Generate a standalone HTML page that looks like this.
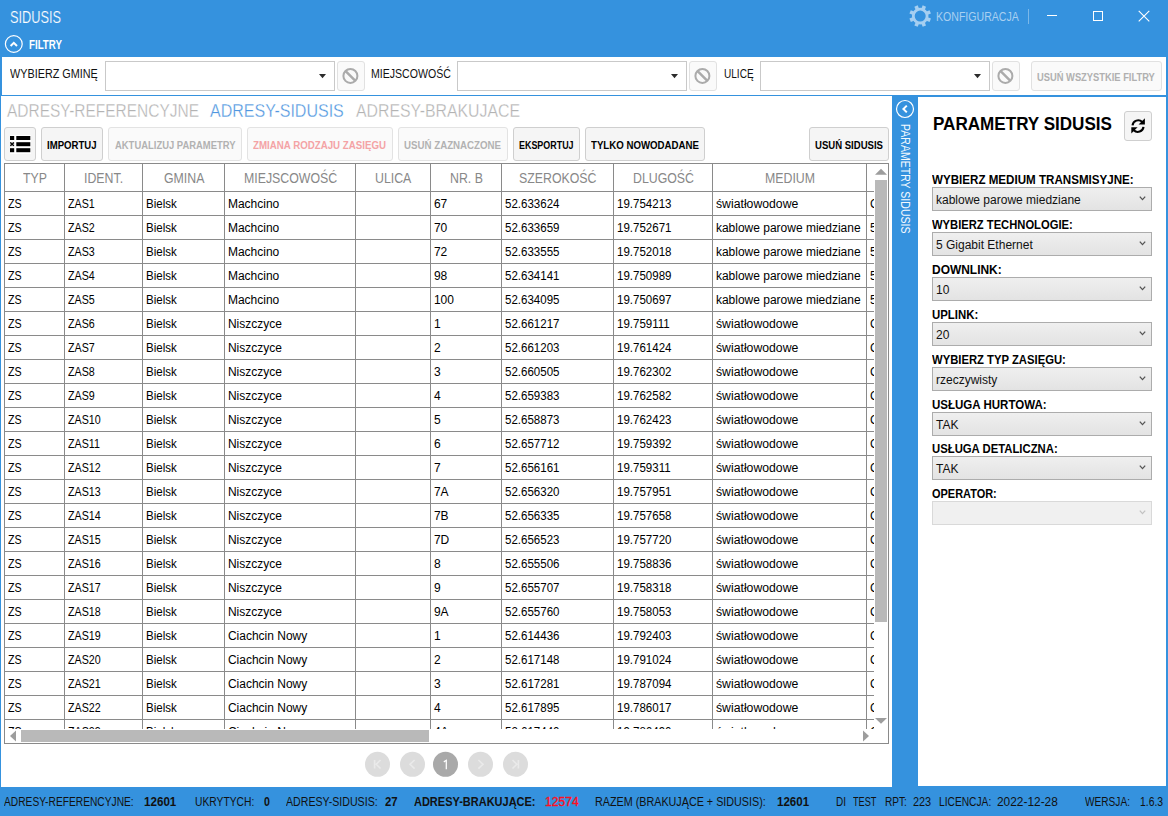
<!DOCTYPE html><html><head><meta charset="utf-8"><style>
html,body{margin:0;padding:0}
body{width:1168px;height:816px;overflow:hidden;position:relative;background:#3592de;font-family:"Liberation Sans",sans-serif}
.r{position:absolute}
.t{position:absolute;white-space:nowrap;transform-origin:0 0}
.c{position:absolute;white-space:nowrap;font-size:12px;line-height:12px;color:#000}
svg{display:block}
</style></head><body>
<div class="t" style="left:9.90px;top:10px;font-size:16px;line-height:16px;color:#fff;transform:scaleX(0.7969);-webkit-text-stroke:0.2px #3592de;">SIDUSIS</div>
<svg class="r" style="left:0;top:0" width="1168" height="60">
<circle cx="13.8" cy="44" r="8.4" fill="none" stroke="#fff" stroke-width="1.2"/>
<polyline points="10.6,46 13.8,42.8 17,46" fill="none" stroke="#fff" stroke-width="2"/>
</svg>
<div class="t" style="left:28.90px;top:39px;font-size:12px;line-height:12px;color:#fff;font-weight:bold;transform:scaleX(0.8112);">FILTRY</div>
<svg class="r" style="left:898px;top:-6px" width="44" height="44"><g transform="translate(22.2,22.1)">
<circle r="6.9" fill="none" stroke="#a6cff1" stroke-width="2.8"/><rect x="-1.8" y="-10.9" width="3.6" height="4" transform="rotate(22.5)" fill="#a6cff1"/><rect x="-1.8" y="-10.9" width="3.6" height="4" transform="rotate(67.5)" fill="#a6cff1"/><rect x="-1.8" y="-10.9" width="3.6" height="4" transform="rotate(112.5)" fill="#a6cff1"/><rect x="-1.8" y="-10.9" width="3.6" height="4" transform="rotate(157.5)" fill="#a6cff1"/><rect x="-1.8" y="-10.9" width="3.6" height="4" transform="rotate(202.5)" fill="#a6cff1"/><rect x="-1.8" y="-10.9" width="3.6" height="4" transform="rotate(247.5)" fill="#a6cff1"/><rect x="-1.8" y="-10.9" width="3.6" height="4" transform="rotate(292.5)" fill="#a6cff1"/><rect x="-1.8" y="-10.9" width="3.6" height="4" transform="rotate(337.5)" fill="#a6cff1"/></g></svg>
<div class="t" style="left:935.90px;top:11px;font-size:12px;line-height:12px;color:#a9d0f1;transform:scaleX(0.8807);">KONFIGURACJA</div>
<div class="r" style="left:1028px;top:9px;width:1px;height:15px;background:rgba(255,255,255,0.35)"></div>
<div class="r" style="left:1047px;top:15px;width:10px;height:1px;background:#fff"></div>
<div class="r" style="left:1093px;top:11px;width:10px;height:10px;border:1px solid #fff;box-sizing:border-box"></div>
<svg class="r" style="left:1136px;top:8px" width="16" height="16"><path d="M2.7 2.8 L13.3 13.4 M13.3 2.8 L2.7 13.4" stroke="#fff" stroke-width="1.1"/></svg>
<div class="r" style="left:2px;top:57px;width:1164px;height:38px;background:#fff"></div>
<div class="t" style="left:10.00px;top:68px;font-size:12px;line-height:12px;color:#111;transform:scaleX(0.9022);">WYBIERZ GMINĘ</div>
<div class="r" style="left:105px;top:61px;width:230px;height:30px;background:#fff;border:1px solid #c9c9c9;box-sizing:border-box"></div>
<svg class="r" style="left:315px;top:70px" width="14" height="12"><polygon points="4,4 11,4 7.5,8.3" fill="#2b2b2b"/></svg>
<div class="r" style="left:337px;top:61px;width:28px;height:30px;background:#fafafa;border:1px solid #e1e1e1;box-sizing:border-box;border-radius:3px"></div>
<svg class="r" style="left:337px;top:61px" width="28" height="30"><circle cx="13.4" cy="14.9" r="7" fill="none" stroke="#ababab" stroke-width="2"/><line x1="8.4" y1="9.9" x2="18.4" y2="19.9" stroke="#ababab" stroke-width="2.5"/></svg>
<div class="t" style="left:370.90px;top:68px;font-size:12px;line-height:12px;color:#111;transform:scaleX(0.8802);">MIEJSCOWOŚĆ</div>
<div class="r" style="left:457px;top:61px;width:230px;height:30px;background:#fff;border:1px solid #c9c9c9;box-sizing:border-box"></div>
<svg class="r" style="left:667px;top:70px" width="14" height="12"><polygon points="4,4 11,4 7.5,8.3" fill="#2b2b2b"/></svg>
<div class="r" style="left:689px;top:61px;width:28px;height:30px;background:#fafafa;border:1px solid #e1e1e1;box-sizing:border-box;border-radius:3px"></div>
<svg class="r" style="left:689px;top:61px" width="28" height="30"><circle cx="13.4" cy="14.9" r="7" fill="none" stroke="#ababab" stroke-width="2"/><line x1="8.4" y1="9.9" x2="18.4" y2="19.9" stroke="#ababab" stroke-width="2.5"/></svg>
<div class="t" style="left:724.00px;top:68px;font-size:12px;line-height:12px;color:#111;transform:scaleX(0.8376);">ULICĘ</div>
<div class="r" style="left:760px;top:61px;width:230px;height:30px;background:#fff;border:1px solid #c9c9c9;box-sizing:border-box"></div>
<svg class="r" style="left:970px;top:70px" width="14" height="12"><polygon points="4,4 11,4 7.5,8.3" fill="#2b2b2b"/></svg>
<div class="r" style="left:992px;top:61px;width:28px;height:30px;background:#fafafa;border:1px solid #e1e1e1;box-sizing:border-box;border-radius:3px"></div>
<svg class="r" style="left:992px;top:61px" width="28" height="30"><circle cx="13.4" cy="14.9" r="7" fill="none" stroke="#ababab" stroke-width="2"/><line x1="8.4" y1="9.9" x2="18.4" y2="19.9" stroke="#ababab" stroke-width="2.5"/></svg>
<div class="r" style="left:1031px;top:61px;width:131px;height:30px;background:#fafafa;border:1px solid #e1e1e1;box-sizing:border-box;border-radius:3px"></div>
<div class="t" style="left:1037.40px;top:72px;font-size:11px;line-height:11px;color:#b0b0b0;font-weight:bold;transform:scaleX(0.8493);">USUŃ WSZYSTKIE FILTRY</div>
<div class="r" style="left:1px;top:96px;width:891px;height:691px;background:#fff"></div>
<div class="t" style="left:7.40px;top:102px;font-size:18px;line-height:18px;color:#b3b3b3;transform:scaleX(0.8595);-webkit-text-stroke:0.3px #fff;">ADRESY-REFERENCYJNE</div>
<div class="t" style="left:210.40px;top:102px;font-size:18px;line-height:18px;color:#4f96e0;transform:scaleX(0.8897);-webkit-text-stroke:0.3px #fff;">ADRESY-SIDUSIS</div>
<div class="t" style="left:356.30px;top:102px;font-size:18px;line-height:18px;color:#b3b3b3;transform:scaleX(0.8799);-webkit-text-stroke:0.3px #fff;">ADRESY-BRAKUJACE</div>
<div class="r" style="left:4px;top:127px;width:32px;height:34px;background:#f5f5f5;border:1px solid #cfcfcf;box-sizing:border-box;border-radius:3px"></div>
<svg class="r" style="left:10px;top:135px" width="21" height="19">
<rect x="0" y="0" width="21" height="19" fill="#fff"/>
<rect x="0" y="1" width="4.2" height="4" fill="#000"/>
<rect x="0" y="7.2" width="4.2" height="4" fill="#b5b5b5"/>
<rect x="0" y="13.2" width="4.2" height="4" fill="#000"/>
<rect x="6.3" y="1" width="14" height="4" fill="#000"/>
<rect x="6.3" y="7.2" width="14" height="4" fill="#000"/>
<rect x="6.3" y="13.2" width="14" height="4" fill="#000"/>
<path d="M0.3 7.5 L3.9 10.9 M3.9 7.5 L0.3 10.9" stroke="#000" stroke-width="1.1"/>
</svg>
<div class="r" style="left:41px;top:127px;width:62px;height:34px;background:#f5f5f5;border:1px solid #cfcfcf;box-sizing:border-box;border-radius:3px"></div>
<div class="t" style="left:47.30px;top:140px;font-size:11px;line-height:11px;color:#000;font-weight:bold;transform:scaleX(0.8712);">IMPORTUJ</div>
<div class="r" style="left:108px;top:127px;width:134px;height:34px;background:#fafafa;border:1px solid #e3e3e3;box-sizing:border-box;border-radius:3px"></div>
<div class="t" style="left:114.70px;top:140px;font-size:11px;line-height:11px;color:#b2b2b2;font-weight:bold;transform:scaleX(0.8572);">AKTUALIZUJ PARAMETRY</div>
<div class="r" style="left:247px;top:127px;width:146px;height:34px;background:#fafafa;border:1px solid #e3e3e3;box-sizing:border-box;border-radius:3px"></div>
<div class="t" style="left:253.00px;top:140px;font-size:11px;line-height:11px;color:#f4a3a5;font-weight:bold;transform:scaleX(0.8835);">ZMIANA RODZAJU ZASIĘGU</div>
<div class="r" style="left:398px;top:127px;width:110px;height:34px;background:#fafafa;border:1px solid #e3e3e3;box-sizing:border-box;border-radius:3px"></div>
<div class="t" style="left:404.30px;top:140px;font-size:11px;line-height:11px;color:#b2b2b2;font-weight:bold;transform:scaleX(0.8827);">USUŃ ZAZNACZONE</div>
<div class="r" style="left:513px;top:127px;width:67px;height:34px;background:#f5f5f5;border:1px solid #cfcfcf;box-sizing:border-box;border-radius:3px"></div>
<div class="t" style="left:518.80px;top:140px;font-size:11px;line-height:11px;color:#000;font-weight:bold;transform:scaleX(0.8117);">EKSPORTUJ</div>
<div class="r" style="left:585px;top:127px;width:120px;height:34px;background:#f5f5f5;border:1px solid #cfcfcf;box-sizing:border-box;border-radius:3px"></div>
<div class="t" style="left:591.30px;top:140px;font-size:11px;line-height:11px;color:#000;font-weight:bold;transform:scaleX(0.8786);">TYLKO NOWODADANE</div>
<div class="r" style="left:809px;top:127px;width:80px;height:34px;background:#f5f5f5;border:1px solid #cfcfcf;box-sizing:border-box;border-radius:3px"></div>
<div class="t" style="left:814.70px;top:140px;font-size:11px;line-height:11px;color:#000;font-weight:bold;transform:scaleX(0.8688);">USUŃ SIDUSIS</div>
<div class="r" style="left:4px;top:163px;width:885px;height:581px;border:1px solid #8a8a8a;box-sizing:border-box;background:#fff"></div>
<div class="r" style="left:64px;top:164px;width:1px;height:565px;background:#8a8a8a"></div>
<div class="r" style="left:142px;top:164px;width:1px;height:565px;background:#8a8a8a"></div>
<div class="r" style="left:224px;top:164px;width:1px;height:565px;background:#8a8a8a"></div>
<div class="r" style="left:355px;top:164px;width:1px;height:565px;background:#8a8a8a"></div>
<div class="r" style="left:430px;top:164px;width:1px;height:565px;background:#8a8a8a"></div>
<div class="r" style="left:501px;top:164px;width:1px;height:565px;background:#8a8a8a"></div>
<div class="r" style="left:613px;top:164px;width:1px;height:565px;background:#8a8a8a"></div>
<div class="r" style="left:712px;top:164px;width:1px;height:565px;background:#8a8a8a"></div>
<div class="r" style="left:866px;top:164px;width:1px;height:565px;background:#8a8a8a"></div>
<div class="r" style="left:5px;top:191px;width:869px;height:1px;background:#8a8a8a"></div>
<div class="r" style="left:5px;top:215px;width:869px;height:1px;background:#8a8a8a"></div>
<div class="r" style="left:5px;top:239px;width:869px;height:1px;background:#8a8a8a"></div>
<div class="r" style="left:5px;top:263px;width:869px;height:1px;background:#8a8a8a"></div>
<div class="r" style="left:5px;top:287px;width:869px;height:1px;background:#8a8a8a"></div>
<div class="r" style="left:5px;top:311px;width:869px;height:1px;background:#8a8a8a"></div>
<div class="r" style="left:5px;top:335px;width:869px;height:1px;background:#8a8a8a"></div>
<div class="r" style="left:5px;top:359px;width:869px;height:1px;background:#8a8a8a"></div>
<div class="r" style="left:5px;top:383px;width:869px;height:1px;background:#8a8a8a"></div>
<div class="r" style="left:5px;top:407px;width:869px;height:1px;background:#8a8a8a"></div>
<div class="r" style="left:5px;top:431px;width:869px;height:1px;background:#8a8a8a"></div>
<div class="r" style="left:5px;top:455px;width:869px;height:1px;background:#8a8a8a"></div>
<div class="r" style="left:5px;top:479px;width:869px;height:1px;background:#8a8a8a"></div>
<div class="r" style="left:5px;top:503px;width:869px;height:1px;background:#8a8a8a"></div>
<div class="r" style="left:5px;top:527px;width:869px;height:1px;background:#8a8a8a"></div>
<div class="r" style="left:5px;top:551px;width:869px;height:1px;background:#8a8a8a"></div>
<div class="r" style="left:5px;top:575px;width:869px;height:1px;background:#8a8a8a"></div>
<div class="r" style="left:5px;top:599px;width:869px;height:1px;background:#8a8a8a"></div>
<div class="r" style="left:5px;top:623px;width:869px;height:1px;background:#8a8a8a"></div>
<div class="r" style="left:5px;top:647px;width:869px;height:1px;background:#8a8a8a"></div>
<div class="r" style="left:5px;top:671px;width:869px;height:1px;background:#8a8a8a"></div>
<div class="r" style="left:5px;top:695px;width:869px;height:1px;background:#8a8a8a"></div>
<div class="r" style="left:5px;top:719px;width:869px;height:1px;background:#8a8a8a"></div>
<div class="t" style="left:23.00px;top:171px;font-size:14px;line-height:14px;color:#888888;transform:scaleX(0.8812);">TYP</div>
<div class="t" style="left:84.48px;top:171px;font-size:14px;line-height:14px;color:#888888;transform:scaleX(0.8812);">IDENT.</div>
<div class="t" style="left:163.77px;top:171px;font-size:14px;line-height:14px;color:#888888;transform:scaleX(0.8812);">GMINA</div>
<div class="t" style="left:243.90px;top:171px;font-size:14px;line-height:14px;color:#888888;transform:scaleX(0.8812);">MIEJSCOWOŚĆ</div>
<div class="t" style="left:375.30px;top:171px;font-size:14px;line-height:14px;color:#888888;transform:scaleX(0.8812);">ULICA</div>
<div class="t" style="left:450.06px;top:171px;font-size:14px;line-height:14px;color:#888888;transform:scaleX(0.8812);">NR. B</div>
<div class="t" style="left:519.26px;top:171px;font-size:14px;line-height:14px;color:#888888;transform:scaleX(0.8812);">SZEROKOŚĆ</div>
<div class="t" style="left:633.00px;top:171px;font-size:14px;line-height:14px;color:#888888;transform:scaleX(0.8812);">DLUGOŚĆ</div>
<div class="t" style="left:764.99px;top:171px;font-size:14px;line-height:14px;color:#888888;transform:scaleX(0.8812);">MEDIUM</div>
<div class="r" style="left:5px;top:192px;width:869px;height:537px;overflow:hidden"><div class="c" style="left:2.9px;top:6.00px;transform:scaleX(0.89);transform-origin:0 0;">ZS</div><div class="c" style="left:62.9px;top:6.00px;transform:scaleX(0.89);transform-origin:0 0;">ZAS1</div><div class="c" style="left:140.9px;top:6.00px;transform:scaleX(0.96);transform-origin:0 0;">Bielsk</div><div class="c" style="left:222.9px;top:6.00px;">Machcino</div><div class="c" style="left:428.9px;top:6.00px;">67</div><div class="c" style="left:499.9px;top:6.00px;transform:scaleX(0.96);transform-origin:0 0;">52.633624</div><div class="c" style="left:611.9px;top:6.00px;transform:scaleX(0.96);transform-origin:0 0;">19.754213</div><div class="c" style="left:710.9px;top:6.00px;transform:scaleX(1.02);transform-origin:0 0;">światłowodowe</div><div class="c" style="left:864.9px;top:6.00px;">C</div><div class="c" style="left:2.9px;top:30.00px;transform:scaleX(0.89);transform-origin:0 0;">ZS</div><div class="c" style="left:62.9px;top:30.00px;transform:scaleX(0.89);transform-origin:0 0;">ZAS2</div><div class="c" style="left:140.9px;top:30.00px;transform:scaleX(0.96);transform-origin:0 0;">Bielsk</div><div class="c" style="left:222.9px;top:30.00px;">Machcino</div><div class="c" style="left:428.9px;top:30.00px;">70</div><div class="c" style="left:499.9px;top:30.00px;transform:scaleX(0.96);transform-origin:0 0;">52.633659</div><div class="c" style="left:611.9px;top:30.00px;transform:scaleX(0.96);transform-origin:0 0;">19.752671</div><div class="c" style="left:710.9px;top:30.00px;">kablowe parowe miedziane</div><div class="c" style="left:864.9px;top:30.00px;">5</div><div class="c" style="left:2.9px;top:54.00px;transform:scaleX(0.89);transform-origin:0 0;">ZS</div><div class="c" style="left:62.9px;top:54.00px;transform:scaleX(0.89);transform-origin:0 0;">ZAS3</div><div class="c" style="left:140.9px;top:54.00px;transform:scaleX(0.96);transform-origin:0 0;">Bielsk</div><div class="c" style="left:222.9px;top:54.00px;">Machcino</div><div class="c" style="left:428.9px;top:54.00px;">72</div><div class="c" style="left:499.9px;top:54.00px;transform:scaleX(0.96);transform-origin:0 0;">52.633555</div><div class="c" style="left:611.9px;top:54.00px;transform:scaleX(0.96);transform-origin:0 0;">19.752018</div><div class="c" style="left:710.9px;top:54.00px;">kablowe parowe miedziane</div><div class="c" style="left:864.9px;top:54.00px;">5</div><div class="c" style="left:2.9px;top:78.00px;transform:scaleX(0.89);transform-origin:0 0;">ZS</div><div class="c" style="left:62.9px;top:78.00px;transform:scaleX(0.89);transform-origin:0 0;">ZAS4</div><div class="c" style="left:140.9px;top:78.00px;transform:scaleX(0.96);transform-origin:0 0;">Bielsk</div><div class="c" style="left:222.9px;top:78.00px;">Machcino</div><div class="c" style="left:428.9px;top:78.00px;">98</div><div class="c" style="left:499.9px;top:78.00px;transform:scaleX(0.96);transform-origin:0 0;">52.634141</div><div class="c" style="left:611.9px;top:78.00px;transform:scaleX(0.96);transform-origin:0 0;">19.750989</div><div class="c" style="left:710.9px;top:78.00px;">kablowe parowe miedziane</div><div class="c" style="left:864.9px;top:78.00px;">5</div><div class="c" style="left:2.9px;top:102.00px;transform:scaleX(0.89);transform-origin:0 0;">ZS</div><div class="c" style="left:62.9px;top:102.00px;transform:scaleX(0.89);transform-origin:0 0;">ZAS5</div><div class="c" style="left:140.9px;top:102.00px;transform:scaleX(0.96);transform-origin:0 0;">Bielsk</div><div class="c" style="left:222.9px;top:102.00px;">Machcino</div><div class="c" style="left:428.9px;top:102.00px;">100</div><div class="c" style="left:499.9px;top:102.00px;transform:scaleX(0.96);transform-origin:0 0;">52.634095</div><div class="c" style="left:611.9px;top:102.00px;transform:scaleX(0.96);transform-origin:0 0;">19.750697</div><div class="c" style="left:710.9px;top:102.00px;">kablowe parowe miedziane</div><div class="c" style="left:864.9px;top:102.00px;">5</div><div class="c" style="left:2.9px;top:126.00px;transform:scaleX(0.89);transform-origin:0 0;">ZS</div><div class="c" style="left:62.9px;top:126.00px;transform:scaleX(0.89);transform-origin:0 0;">ZAS6</div><div class="c" style="left:140.9px;top:126.00px;transform:scaleX(0.96);transform-origin:0 0;">Bielsk</div><div class="c" style="left:222.9px;top:126.00px;">Niszczyce</div><div class="c" style="left:428.9px;top:126.00px;">1</div><div class="c" style="left:499.9px;top:126.00px;transform:scaleX(0.96);transform-origin:0 0;">52.661217</div><div class="c" style="left:611.9px;top:126.00px;transform:scaleX(0.96);transform-origin:0 0;">19.759111</div><div class="c" style="left:710.9px;top:126.00px;transform:scaleX(1.02);transform-origin:0 0;">światłowodowe</div><div class="c" style="left:864.9px;top:126.00px;">C</div><div class="c" style="left:2.9px;top:150.00px;transform:scaleX(0.89);transform-origin:0 0;">ZS</div><div class="c" style="left:62.9px;top:150.00px;transform:scaleX(0.89);transform-origin:0 0;">ZAS7</div><div class="c" style="left:140.9px;top:150.00px;transform:scaleX(0.96);transform-origin:0 0;">Bielsk</div><div class="c" style="left:222.9px;top:150.00px;">Niszczyce</div><div class="c" style="left:428.9px;top:150.00px;">2</div><div class="c" style="left:499.9px;top:150.00px;transform:scaleX(0.96);transform-origin:0 0;">52.661203</div><div class="c" style="left:611.9px;top:150.00px;transform:scaleX(0.96);transform-origin:0 0;">19.761424</div><div class="c" style="left:710.9px;top:150.00px;transform:scaleX(1.02);transform-origin:0 0;">światłowodowe</div><div class="c" style="left:864.9px;top:150.00px;">C</div><div class="c" style="left:2.9px;top:174.00px;transform:scaleX(0.89);transform-origin:0 0;">ZS</div><div class="c" style="left:62.9px;top:174.00px;transform:scaleX(0.89);transform-origin:0 0;">ZAS8</div><div class="c" style="left:140.9px;top:174.00px;transform:scaleX(0.96);transform-origin:0 0;">Bielsk</div><div class="c" style="left:222.9px;top:174.00px;">Niszczyce</div><div class="c" style="left:428.9px;top:174.00px;">3</div><div class="c" style="left:499.9px;top:174.00px;transform:scaleX(0.96);transform-origin:0 0;">52.660505</div><div class="c" style="left:611.9px;top:174.00px;transform:scaleX(0.96);transform-origin:0 0;">19.762302</div><div class="c" style="left:710.9px;top:174.00px;transform:scaleX(1.02);transform-origin:0 0;">światłowodowe</div><div class="c" style="left:864.9px;top:174.00px;">C</div><div class="c" style="left:2.9px;top:198.00px;transform:scaleX(0.89);transform-origin:0 0;">ZS</div><div class="c" style="left:62.9px;top:198.00px;transform:scaleX(0.89);transform-origin:0 0;">ZAS9</div><div class="c" style="left:140.9px;top:198.00px;transform:scaleX(0.96);transform-origin:0 0;">Bielsk</div><div class="c" style="left:222.9px;top:198.00px;">Niszczyce</div><div class="c" style="left:428.9px;top:198.00px;">4</div><div class="c" style="left:499.9px;top:198.00px;transform:scaleX(0.96);transform-origin:0 0;">52.659383</div><div class="c" style="left:611.9px;top:198.00px;transform:scaleX(0.96);transform-origin:0 0;">19.762582</div><div class="c" style="left:710.9px;top:198.00px;transform:scaleX(1.02);transform-origin:0 0;">światłowodowe</div><div class="c" style="left:864.9px;top:198.00px;">C</div><div class="c" style="left:2.9px;top:222.00px;transform:scaleX(0.89);transform-origin:0 0;">ZS</div><div class="c" style="left:62.9px;top:222.00px;transform:scaleX(0.89);transform-origin:0 0;">ZAS10</div><div class="c" style="left:140.9px;top:222.00px;transform:scaleX(0.96);transform-origin:0 0;">Bielsk</div><div class="c" style="left:222.9px;top:222.00px;">Niszczyce</div><div class="c" style="left:428.9px;top:222.00px;">5</div><div class="c" style="left:499.9px;top:222.00px;transform:scaleX(0.96);transform-origin:0 0;">52.658873</div><div class="c" style="left:611.9px;top:222.00px;transform:scaleX(0.96);transform-origin:0 0;">19.762423</div><div class="c" style="left:710.9px;top:222.00px;transform:scaleX(1.02);transform-origin:0 0;">światłowodowe</div><div class="c" style="left:864.9px;top:222.00px;">C</div><div class="c" style="left:2.9px;top:246.00px;transform:scaleX(0.89);transform-origin:0 0;">ZS</div><div class="c" style="left:62.9px;top:246.00px;transform:scaleX(0.89);transform-origin:0 0;">ZAS11</div><div class="c" style="left:140.9px;top:246.00px;transform:scaleX(0.96);transform-origin:0 0;">Bielsk</div><div class="c" style="left:222.9px;top:246.00px;">Niszczyce</div><div class="c" style="left:428.9px;top:246.00px;">6</div><div class="c" style="left:499.9px;top:246.00px;transform:scaleX(0.96);transform-origin:0 0;">52.657712</div><div class="c" style="left:611.9px;top:246.00px;transform:scaleX(0.96);transform-origin:0 0;">19.759392</div><div class="c" style="left:710.9px;top:246.00px;transform:scaleX(1.02);transform-origin:0 0;">światłowodowe</div><div class="c" style="left:864.9px;top:246.00px;">C</div><div class="c" style="left:2.9px;top:270.00px;transform:scaleX(0.89);transform-origin:0 0;">ZS</div><div class="c" style="left:62.9px;top:270.00px;transform:scaleX(0.89);transform-origin:0 0;">ZAS12</div><div class="c" style="left:140.9px;top:270.00px;transform:scaleX(0.96);transform-origin:0 0;">Bielsk</div><div class="c" style="left:222.9px;top:270.00px;">Niszczyce</div><div class="c" style="left:428.9px;top:270.00px;">7</div><div class="c" style="left:499.9px;top:270.00px;transform:scaleX(0.96);transform-origin:0 0;">52.656161</div><div class="c" style="left:611.9px;top:270.00px;transform:scaleX(0.96);transform-origin:0 0;">19.759311</div><div class="c" style="left:710.9px;top:270.00px;transform:scaleX(1.02);transform-origin:0 0;">światłowodowe</div><div class="c" style="left:864.9px;top:270.00px;">C</div><div class="c" style="left:2.9px;top:294.00px;transform:scaleX(0.89);transform-origin:0 0;">ZS</div><div class="c" style="left:62.9px;top:294.00px;transform:scaleX(0.89);transform-origin:0 0;">ZAS13</div><div class="c" style="left:140.9px;top:294.00px;transform:scaleX(0.96);transform-origin:0 0;">Bielsk</div><div class="c" style="left:222.9px;top:294.00px;">Niszczyce</div><div class="c" style="left:428.9px;top:294.00px;">7A</div><div class="c" style="left:499.9px;top:294.00px;transform:scaleX(0.96);transform-origin:0 0;">52.656320</div><div class="c" style="left:611.9px;top:294.00px;transform:scaleX(0.96);transform-origin:0 0;">19.757951</div><div class="c" style="left:710.9px;top:294.00px;transform:scaleX(1.02);transform-origin:0 0;">światłowodowe</div><div class="c" style="left:864.9px;top:294.00px;">C</div><div class="c" style="left:2.9px;top:318.00px;transform:scaleX(0.89);transform-origin:0 0;">ZS</div><div class="c" style="left:62.9px;top:318.00px;transform:scaleX(0.89);transform-origin:0 0;">ZAS14</div><div class="c" style="left:140.9px;top:318.00px;transform:scaleX(0.96);transform-origin:0 0;">Bielsk</div><div class="c" style="left:222.9px;top:318.00px;">Niszczyce</div><div class="c" style="left:428.9px;top:318.00px;">7B</div><div class="c" style="left:499.9px;top:318.00px;transform:scaleX(0.96);transform-origin:0 0;">52.656335</div><div class="c" style="left:611.9px;top:318.00px;transform:scaleX(0.96);transform-origin:0 0;">19.757658</div><div class="c" style="left:710.9px;top:318.00px;transform:scaleX(1.02);transform-origin:0 0;">światłowodowe</div><div class="c" style="left:864.9px;top:318.00px;">C</div><div class="c" style="left:2.9px;top:342.00px;transform:scaleX(0.89);transform-origin:0 0;">ZS</div><div class="c" style="left:62.9px;top:342.00px;transform:scaleX(0.89);transform-origin:0 0;">ZAS15</div><div class="c" style="left:140.9px;top:342.00px;transform:scaleX(0.96);transform-origin:0 0;">Bielsk</div><div class="c" style="left:222.9px;top:342.00px;">Niszczyce</div><div class="c" style="left:428.9px;top:342.00px;">7D</div><div class="c" style="left:499.9px;top:342.00px;transform:scaleX(0.96);transform-origin:0 0;">52.656523</div><div class="c" style="left:611.9px;top:342.00px;transform:scaleX(0.96);transform-origin:0 0;">19.757720</div><div class="c" style="left:710.9px;top:342.00px;transform:scaleX(1.02);transform-origin:0 0;">światłowodowe</div><div class="c" style="left:864.9px;top:342.00px;">C</div><div class="c" style="left:2.9px;top:366.00px;transform:scaleX(0.89);transform-origin:0 0;">ZS</div><div class="c" style="left:62.9px;top:366.00px;transform:scaleX(0.89);transform-origin:0 0;">ZAS16</div><div class="c" style="left:140.9px;top:366.00px;transform:scaleX(0.96);transform-origin:0 0;">Bielsk</div><div class="c" style="left:222.9px;top:366.00px;">Niszczyce</div><div class="c" style="left:428.9px;top:366.00px;">8</div><div class="c" style="left:499.9px;top:366.00px;transform:scaleX(0.96);transform-origin:0 0;">52.655506</div><div class="c" style="left:611.9px;top:366.00px;transform:scaleX(0.96);transform-origin:0 0;">19.758836</div><div class="c" style="left:710.9px;top:366.00px;transform:scaleX(1.02);transform-origin:0 0;">światłowodowe</div><div class="c" style="left:864.9px;top:366.00px;">C</div><div class="c" style="left:2.9px;top:390.00px;transform:scaleX(0.89);transform-origin:0 0;">ZS</div><div class="c" style="left:62.9px;top:390.00px;transform:scaleX(0.89);transform-origin:0 0;">ZAS17</div><div class="c" style="left:140.9px;top:390.00px;transform:scaleX(0.96);transform-origin:0 0;">Bielsk</div><div class="c" style="left:222.9px;top:390.00px;">Niszczyce</div><div class="c" style="left:428.9px;top:390.00px;">9</div><div class="c" style="left:499.9px;top:390.00px;transform:scaleX(0.96);transform-origin:0 0;">52.655707</div><div class="c" style="left:611.9px;top:390.00px;transform:scaleX(0.96);transform-origin:0 0;">19.758318</div><div class="c" style="left:710.9px;top:390.00px;transform:scaleX(1.02);transform-origin:0 0;">światłowodowe</div><div class="c" style="left:864.9px;top:390.00px;">C</div><div class="c" style="left:2.9px;top:414.00px;transform:scaleX(0.89);transform-origin:0 0;">ZS</div><div class="c" style="left:62.9px;top:414.00px;transform:scaleX(0.89);transform-origin:0 0;">ZAS18</div><div class="c" style="left:140.9px;top:414.00px;transform:scaleX(0.96);transform-origin:0 0;">Bielsk</div><div class="c" style="left:222.9px;top:414.00px;">Niszczyce</div><div class="c" style="left:428.9px;top:414.00px;">9A</div><div class="c" style="left:499.9px;top:414.00px;transform:scaleX(0.96);transform-origin:0 0;">52.655760</div><div class="c" style="left:611.9px;top:414.00px;transform:scaleX(0.96);transform-origin:0 0;">19.758053</div><div class="c" style="left:710.9px;top:414.00px;transform:scaleX(1.02);transform-origin:0 0;">światłowodowe</div><div class="c" style="left:864.9px;top:414.00px;">C</div><div class="c" style="left:2.9px;top:438.00px;transform:scaleX(0.89);transform-origin:0 0;">ZS</div><div class="c" style="left:62.9px;top:438.00px;transform:scaleX(0.89);transform-origin:0 0;">ZAS19</div><div class="c" style="left:140.9px;top:438.00px;transform:scaleX(0.96);transform-origin:0 0;">Bielsk</div><div class="c" style="left:222.9px;top:438.00px;">Ciachcin Nowy</div><div class="c" style="left:428.9px;top:438.00px;">1</div><div class="c" style="left:499.9px;top:438.00px;transform:scaleX(0.96);transform-origin:0 0;">52.614436</div><div class="c" style="left:611.9px;top:438.00px;transform:scaleX(0.96);transform-origin:0 0;">19.792403</div><div class="c" style="left:710.9px;top:438.00px;transform:scaleX(1.02);transform-origin:0 0;">światłowodowe</div><div class="c" style="left:864.9px;top:438.00px;">C</div><div class="c" style="left:2.9px;top:462.00px;transform:scaleX(0.89);transform-origin:0 0;">ZS</div><div class="c" style="left:62.9px;top:462.00px;transform:scaleX(0.89);transform-origin:0 0;">ZAS20</div><div class="c" style="left:140.9px;top:462.00px;transform:scaleX(0.96);transform-origin:0 0;">Bielsk</div><div class="c" style="left:222.9px;top:462.00px;">Ciachcin Nowy</div><div class="c" style="left:428.9px;top:462.00px;">2</div><div class="c" style="left:499.9px;top:462.00px;transform:scaleX(0.96);transform-origin:0 0;">52.617148</div><div class="c" style="left:611.9px;top:462.00px;transform:scaleX(0.96);transform-origin:0 0;">19.791024</div><div class="c" style="left:710.9px;top:462.00px;transform:scaleX(1.02);transform-origin:0 0;">światłowodowe</div><div class="c" style="left:864.9px;top:462.00px;">C</div><div class="c" style="left:2.9px;top:486.00px;transform:scaleX(0.89);transform-origin:0 0;">ZS</div><div class="c" style="left:62.9px;top:486.00px;transform:scaleX(0.89);transform-origin:0 0;">ZAS21</div><div class="c" style="left:140.9px;top:486.00px;transform:scaleX(0.96);transform-origin:0 0;">Bielsk</div><div class="c" style="left:222.9px;top:486.00px;">Ciachcin Nowy</div><div class="c" style="left:428.9px;top:486.00px;">3</div><div class="c" style="left:499.9px;top:486.00px;transform:scaleX(0.96);transform-origin:0 0;">52.617281</div><div class="c" style="left:611.9px;top:486.00px;transform:scaleX(0.96);transform-origin:0 0;">19.787094</div><div class="c" style="left:710.9px;top:486.00px;transform:scaleX(1.02);transform-origin:0 0;">światłowodowe</div><div class="c" style="left:864.9px;top:486.00px;">C</div><div class="c" style="left:2.9px;top:510.00px;transform:scaleX(0.89);transform-origin:0 0;">ZS</div><div class="c" style="left:62.9px;top:510.00px;transform:scaleX(0.89);transform-origin:0 0;">ZAS22</div><div class="c" style="left:140.9px;top:510.00px;transform:scaleX(0.96);transform-origin:0 0;">Bielsk</div><div class="c" style="left:222.9px;top:510.00px;">Ciachcin Nowy</div><div class="c" style="left:428.9px;top:510.00px;">4</div><div class="c" style="left:499.9px;top:510.00px;transform:scaleX(0.96);transform-origin:0 0;">52.617895</div><div class="c" style="left:611.9px;top:510.00px;transform:scaleX(0.96);transform-origin:0 0;">19.786017</div><div class="c" style="left:710.9px;top:510.00px;transform:scaleX(1.02);transform-origin:0 0;">światłowodowe</div><div class="c" style="left:864.9px;top:510.00px;">C</div><div class="c" style="left:2.9px;top:534.00px;transform:scaleX(0.89);transform-origin:0 0;">ZS</div><div class="c" style="left:62.9px;top:534.00px;transform:scaleX(0.89);transform-origin:0 0;">ZAS23</div><div class="c" style="left:140.9px;top:534.00px;transform:scaleX(0.96);transform-origin:0 0;">Bielsk</div><div class="c" style="left:222.9px;top:534.00px;">Ciachcin Nowy</div><div class="c" style="left:428.9px;top:534.00px;">4A</div><div class="c" style="left:499.9px;top:534.00px;transform:scaleX(0.96);transform-origin:0 0;">52.617440</div><div class="c" style="left:611.9px;top:534.00px;transform:scaleX(0.96);transform-origin:0 0;">19.786490</div><div class="c" style="left:710.9px;top:534.00px;transform:scaleX(1.02);transform-origin:0 0;">światłowodowe</div><div class="c" style="left:864.9px;top:534.00px;">C</div></div>
<svg class="r" style="left:874px;top:164px" width="14" height="566">
<polygon points="1,10.7 13,10.7 7,4.8" fill="#9d9d9d"/>
<rect x="1" y="16" width="12" height="442" fill="#b9b9b9"/>
<polygon points="1,554 13,554 7,559.8" fill="#9d9d9d"/>
</svg>
<div class="r" style="left:5px;top:729px;width:869px;height:14px;background:#fff"></div>
<svg class="r" style="left:5px;top:729px" width="869" height="14">
<polygon points="5,7 11,1.5 11,12.6" fill="#9d9d9d"/>
<rect x="16" y="1" width="408" height="12" fill="#b9b9b9"/>
<polygon points="864,7 858,1.5 858,12.6" fill="#9d9d9d"/>
</svg>
<svg class="r" style="left:0;top:0" width="1168" height="816"><circle cx="377.5" cy="764.3" r="12.5" fill="#dcdcdc"/><circle cx="412.5" cy="764.3" r="12.5" fill="#dcdcdc"/><circle cx="445.5" cy="764.3" r="12.5" fill="#a9a9a9"/><circle cx="480.5" cy="764.3" r="12.5" fill="#dcdcdc"/><circle cx="515.5" cy="764.3" r="12.5" fill="#dcdcdc"/><path d="M443.8 761.9 L446.3 760.3 V769.2" stroke="#fff" stroke-width="1.25" fill="none"/><path d="M374.6 760 V768.5 M380.5 760 L376.2 764.3 L380.5 768.5" stroke="#eaeaea" stroke-width="1.6" fill="none"/><path d="M414.6 760 L410 764.3 L414.6 768.6" stroke="#eaeaea" stroke-width="1.6" fill="none"/><path d="M478.4 760 L483 764.3 L478.4 768.6" stroke="#eaeaea" stroke-width="1.6" fill="none"/><path d="M518.4 760 V768.5 M512.5 760 L516.8 764.3 L512.5 768.5" stroke="#eaeaea" stroke-width="1.6" fill="none"/></svg>
<svg class="r" style="left:892px;top:95px" width="26" height="30">
<circle cx="13" cy="14" r="8.5" fill="none" stroke="#fff" stroke-width="1.2"/>
<polyline points="14.8,10.6 11.4,14 14.8,17.4" fill="none" stroke="#fff" stroke-width="2"/>
</svg>
<div class="t" style="left:897.5px;top:123.5px;font-size:13.5px;line-height:14px;color:#f4f9fe;writing-mode:vertical-rl;transform-origin:top;transform:scaleY(0.7805)">PARAMETRY SIDUSIS</div>
<div class="r" style="left:918px;top:97px;width:248px;height:689px;background:#fff"></div>
<div class="t" style="left:933.00px;top:115px;font-size:18px;line-height:18px;color:#000;font-weight:bold;transform:scaleX(0.9484);">PARAMETRY SIDUSIS</div>
<div class="r" style="left:1124px;top:111px;width:28px;height:30px;background:#f5f5f5;border:1px solid #cfcfcf;box-sizing:border-box;border-radius:3px"></div>
<svg class="r" style="left:1130px;top:117px" width="16" height="18" viewBox="0 0 16 18">
<path d="M2.5 8.3 A5.7 5.7 0 0 1 12.2 5.0" fill="none" stroke="#000" stroke-width="2.1"/>
<polygon points="14.9,1.2 14.9,7.6 8.6,7.6" fill="#000"/>
<path d="M13.5 9.9 A5.7 5.7 0 0 1 3.8 13.2" fill="none" stroke="#000" stroke-width="2.1"/>
<polygon points="1.3,16.6 1.3,10.2 7.6,10.2" fill="#000"/>
</svg>
<div class="t" style="left:932.30px;top:174px;font-size:12px;line-height:12px;color:#000;font-weight:bold;transform:scaleX(0.9666);">WYBIERZ MEDIUM TRANSMISYJNE:</div>
<div class="r" style="left:932px;top:187px;width:220px;height:24px;background:linear-gradient(#efefef,#e3e3e3);border:1px solid #acacac;box-sizing:border-box"></div>
<div class="c" style="left:936px;top:194px;color:#111">kablowe parowe miedziane</div>
<svg class="r" style="left:1137px;top:194px" width="10" height="10"><polyline points="2.8,2.6 5.5,5.6 8.2,2.6" fill="none" stroke="#555" stroke-width="1.3"/></svg>
<div class="t" style="left:932.30px;top:219px;font-size:12px;line-height:12px;color:#000;font-weight:bold;transform:scaleX(0.9339);">WYBIERZ TECHNOLOGIE:</div>
<div class="r" style="left:932px;top:232px;width:220px;height:24px;background:linear-gradient(#efefef,#e3e3e3);border:1px solid #acacac;box-sizing:border-box"></div>
<div class="c" style="left:936px;top:239px;color:#111">5 Gigabit Ethernet</div>
<svg class="r" style="left:1137px;top:239px" width="10" height="10"><polyline points="2.8,2.6 5.5,5.6 8.2,2.6" fill="none" stroke="#555" stroke-width="1.3"/></svg>
<div class="t" style="left:932.30px;top:264px;font-size:12px;line-height:12px;color:#000;font-weight:bold;transform:scaleX(0.9963);">DOWNLINK:</div>
<div class="r" style="left:932px;top:277px;width:220px;height:24px;background:linear-gradient(#efefef,#e3e3e3);border:1px solid #acacac;box-sizing:border-box"></div>
<div class="c" style="left:936px;top:284px;color:#111">10</div>
<svg class="r" style="left:1137px;top:284px" width="10" height="10"><polyline points="2.8,2.6 5.5,5.6 8.2,2.6" fill="none" stroke="#555" stroke-width="1.3"/></svg>
<div class="t" style="left:932.30px;top:309px;font-size:12px;line-height:12px;color:#000;font-weight:bold;transform:scaleX(0.9515);">UPLINK:</div>
<div class="r" style="left:932px;top:322px;width:220px;height:24px;background:linear-gradient(#efefef,#e3e3e3);border:1px solid #acacac;box-sizing:border-box"></div>
<div class="c" style="left:936px;top:329px;color:#111">20</div>
<svg class="r" style="left:1137px;top:329px" width="10" height="10"><polyline points="2.8,2.6 5.5,5.6 8.2,2.6" fill="none" stroke="#555" stroke-width="1.3"/></svg>
<div class="t" style="left:932.30px;top:354px;font-size:12px;line-height:12px;color:#000;font-weight:bold;transform:scaleX(0.9393);">WYBIERZ TYP ZASIĘGU:</div>
<div class="r" style="left:932px;top:367px;width:220px;height:24px;background:linear-gradient(#efefef,#e3e3e3);border:1px solid #acacac;box-sizing:border-box"></div>
<div class="c" style="left:936px;top:374px;color:#111">rzeczywisty</div>
<svg class="r" style="left:1137px;top:374px" width="10" height="10"><polyline points="2.8,2.6 5.5,5.6 8.2,2.6" fill="none" stroke="#555" stroke-width="1.3"/></svg>
<div class="t" style="left:932.30px;top:399px;font-size:12px;line-height:12px;color:#000;font-weight:bold;transform:scaleX(0.9603);">USŁUGA HURTOWA:</div>
<div class="r" style="left:932px;top:412px;width:220px;height:24px;background:linear-gradient(#efefef,#e3e3e3);border:1px solid #acacac;box-sizing:border-box"></div>
<div class="c" style="left:936px;top:419px;color:#111">TAK</div>
<svg class="r" style="left:1137px;top:419px" width="10" height="10"><polyline points="2.8,2.6 5.5,5.6 8.2,2.6" fill="none" stroke="#555" stroke-width="1.3"/></svg>
<div class="t" style="left:932.30px;top:443px;font-size:12px;line-height:12px;color:#000;font-weight:bold;transform:scaleX(0.9428);">USŁUGA DETALICZNA:</div>
<div class="r" style="left:932px;top:456px;width:220px;height:24px;background:linear-gradient(#efefef,#e3e3e3);border:1px solid #acacac;box-sizing:border-box"></div>
<div class="c" style="left:936px;top:463px;color:#111">TAK</div>
<svg class="r" style="left:1137px;top:463px" width="10" height="10"><polyline points="2.8,2.6 5.5,5.6 8.2,2.6" fill="none" stroke="#555" stroke-width="1.3"/></svg>
<div class="t" style="left:932.30px;top:488px;font-size:12px;line-height:12px;color:#000;font-weight:bold;transform:scaleX(0.9137);">OPERATOR:</div>
<div class="r" style="left:932px;top:501px;width:220px;height:24px;background:#f0f0f0;border:1px solid #d9d9d9;box-sizing:border-box"></div>
<svg class="r" style="left:1137px;top:508px" width="10" height="10"><polyline points="2.8,2.6 5.5,5.6 8.2,2.6" fill="none" stroke="#c2c2c2" stroke-width="1.3"/></svg>
<div class="t" style="left:3.90px;top:796px;font-size:12px;line-height:12px;color:#111;transform:scaleX(0.8517);">ADRESY-REFERENCYJNE:</div>
<div class="t" style="left:144.40px;top:796px;font-size:12px;line-height:12px;color:#111;font-weight:bold;transform:scaleX(0.9682);">12601</div>
<div class="t" style="left:194.50px;top:796px;font-size:12px;line-height:12px;color:#111;transform:scaleX(0.8579);">UKRYTYCH:</div>
<div class="t" style="left:263.80px;top:796px;font-size:12px;line-height:12px;color:#111;font-weight:bold;transform:scaleX(0.8859);">0</div>
<div class="t" style="left:286.40px;top:796px;font-size:12px;line-height:12px;color:#111;transform:scaleX(0.8850);">ADRESY-SIDUSIS:</div>
<div class="t" style="left:384.80px;top:796px;font-size:12px;line-height:12px;color:#111;font-weight:bold;transform:scaleX(0.9459);">27</div>
<div class="t" style="left:414.10px;top:796px;font-size:12px;line-height:12px;color:#111;font-weight:bold;transform:scaleX(0.9159);">ADRESY-BRAKUJĄCE:</div>
<div class="t" style="left:545.30px;top:796px;font-size:12px;line-height:12px;color:#ff1020;transform:scaleX(1.0072);-webkit-text-stroke:0.35px #ff1020;">12574</div>
<div class="t" style="left:595.40px;top:796px;font-size:12px;line-height:12px;color:#111;transform:scaleX(0.8972);">RAZEM (BRAKUJĄCE + SIDUSIS):</div>
<div class="t" style="left:776.50px;top:796px;font-size:12px;line-height:12px;color:#111;font-weight:bold;transform:scaleX(0.9622);">12601</div>
<div class="t" style="left:835.80px;top:796px;font-size:12px;line-height:12px;color:#111;transform:scaleX(0.8333);">DI</div>
<div class="t" style="left:853.00px;top:796px;font-size:12px;line-height:12px;color:#111;transform:scaleX(0.7632);">TEST</div>
<div class="t" style="left:884.50px;top:796px;font-size:12px;line-height:12px;color:#111;transform:scaleX(0.8391);">RPT:</div>
<div class="t" style="left:912.90px;top:796px;font-size:12px;line-height:12px;color:#111;transform:scaleX(0.9082);">223</div>
<div class="t" style="left:938.60px;top:796px;font-size:12px;line-height:12px;color:#111;transform:scaleX(0.8513);">LICENCJA:</div>
<div class="t" style="left:997.20px;top:796px;font-size:12px;line-height:12px;color:#111;transform:scaleX(0.9906);">2022-12-28</div>
<div class="t" style="left:1084.50px;top:796px;font-size:12px;line-height:12px;color:#111;transform:scaleX(0.8436);">WERSJA:</div>
<div class="t" style="left:1139.80px;top:796px;font-size:12px;line-height:12px;color:#111;transform:scaleX(0.8652);">1.6.3</div>
</body></html>
